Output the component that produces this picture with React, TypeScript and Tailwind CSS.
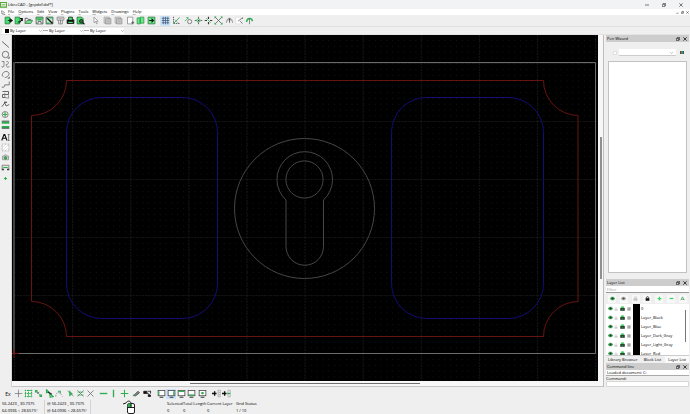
import React from "react";

type Shapes = React.ReactNode;

const G = "#2fae50";
const D = "#3b3b3b";
const L = "#a8a8a8";

function Icon({ children, className = "size-[9px]" }: { children: Shapes; className?: string }) {
  return (
    <svg viewBox="0 0 12 12" className={`${className} block shrink-0`} fill="none" stroke={D} strokeWidth="1" aria-hidden="true">
      {children}
    </svg>
  );
}

interface Tool {
  name: string;
  art: Shapes;
  active?: boolean;
}

const screenArt = (extra: Shapes) => (
  <>
    <rect x="1.5" y="2" width="9" height="7" fill="#fff" />
    <path d="M3.5 11h5" strokeWidth="1.4" />
    {extra}
  </>
);

const gridArt = (color: string) => <path d="M1 3h10M1 6h10M1 9h10M3 1v10M6 1v10M9 1v10" stroke={color} />;

const fileTools: Tool[] = [
  { name: "New", art: <><path d="M1.5 1.5h6v9h-6z" fill="#45e06e" stroke="#1f7a38" /><path d="M5 6h3V3.5L11.5 6 8 8.5V6" fill="#111" stroke="#111" /></> },
  { name: "New from template", art: <><path d="M1.5 1.5h6v9h-6z" fill="#45e06e" stroke="#1f7a38" /><path d="M5 8h3l3-4M8 3.5h3v3" stroke="#111" strokeWidth="1.6" /></> },
  { name: "Open", art: <><path d="M1.5 10V3h3l1 1.5H9V6" stroke={D} /><path d="M1.5 10L4 6h7.5L9 10z" fill="#6de58a" stroke="#3d7a4c" /></> },
  { name: "Save", art: <><path d="M1.5 1.5h9v9h-9z" fill="#dff5e4" /><path d="M1 2.5h10M3 5h6" stroke={G} strokeWidth="2" /><path d="M4 10V7.5h4V10" fill="#fff" /></> },
  { name: "Save as", art: <><path d="M1.5 1.5h9v9h-9z" fill="#c6f1d0" /><path d="M3 3l7 7" stroke="#111" strokeWidth="1.8" /><path d="M2 9.5h4M6 2.5h4" stroke={G} strokeWidth="1.5" /></> },
  { name: "Save all", art: <><path d="M1.5 1.5h9v4h-9zM3.5 5.5v5h5v-5M6 5v5" stroke="#777" /><path d="M3 3.5h6" stroke="#999" /></> },
  { name: "Print", art: <><path d="M1.5 5h9v5h-9z" fill="#111" stroke="#111" /><path d="M3.5 5V1.5h5V5" fill="#45e06e" stroke="#111" /><path d="M3 8.5h6" stroke="#45e06e" strokeWidth="1.6" /></> },
  { name: "Print preview", art: <><path d="M1.5 1.5h6l2 2v7h-8z" fill="#45e06e" stroke="#1d5c2d" /><circle cx="7" cy="7" r="2.4" fill="#2d6e3e" stroke="#111" /><path d="M9 9l2.3 2" stroke="#111" strokeWidth="1.5" /></> },
];

const pointerTools: Tool[] = [
  { name: "Select", art: <path d="M4 1.5v7.5l2-1.7 1.4 3.2 1-.5L7 7h2.5z" fill="#fff" stroke="#777" strokeWidth=".8" /> },
];

const copyArt = (
  <>
    <path d="M1.5 1.5h7v8h-7z" fill="#e2e2e2" stroke="#999" />
    <path d="M3.5 3.5h7v7h-7z" fill="#d0d0d0" stroke="#8b8b8b" />
    <path d="M5 5.5h4M5 8h4" stroke="#999" />
  </>
);

const editTools: Tool[] = [
  { name: "Cut", art: copyArt },
  { name: "Copy", art: copyArt },
];

const blockTools: Tool[] = [
  { name: "Paste", art: <><path d="M2 1.5h7v9H2z" fill="#fff" stroke="#888" /><path d="M7 9h4M9 7v4" stroke="#444" /></> },
  { name: "Blocks", art: <><path d="M1.5 2.5h4v8h-4zM5.5 1.5h5v8h-5z" fill="#69ea88" stroke="#2e9148" /></> },
  { name: "Insert block", art: <><path d="M1.5 1.5h9v9h-9z" fill="#69ea88" stroke="#26713b" /><path d="M3 6h5M6 3.5L8.5 6 6 8.5" stroke="#111" strokeWidth="1.6" /></> },
];

const gridTools: Tool[] = [
  { name: "Grid", art: gridArt("#3f5a78"), active: true },
  { name: "Draft mode", art: <><path d="M2 1v9h9" strokeDasharray="2 1" /><path d="M2 10l8-8" stroke={G} strokeWidth="1.2" /><path d="M4 5l4 4" stroke="#888" /></> },
];

const viewTools: Tool[] = [
  { name: "Redraw", art: <><circle cx="7.5" cy="7.5" r="2.8" stroke="#666" /><path d="M1 7l4-4M3 2h2.5v2.5" stroke={G} /></> },
  { name: "Zoom in", art: <><path d="M6 1v10M1 6h10" stroke={D} strokeDasharray="2.5 1.5" /><path d="M6 3l3 3-3 3-3-3z" stroke={G} strokeWidth="1.2" /></> },
  { name: "Zoom out", art: <><path d="M6 1v3M6 8v3M1 6h3M8 6h3" strokeWidth="1.6" /><path d="M3 3l6 6" stroke={G} /></> },
  { name: "Auto zoom", art: <><path d="M1.5 1.5l9 9M10.5 1.5l-9 9" stroke="#555" /><path d="M1 3V1h2M9 1h2v2M1 9v2h2M9 11h2V9" stroke={G} /></> },
  { name: "Previous view", art: <><path d="M2 9c0-8 8-8 8 0" stroke="#777" /><path d="M6 3v6M4 6l2-2 2 2" /></> },
  { name: "Zoom window", art: <><path d="M1 1.5h7v9H1z" fill="#fff" stroke="#ddd" /><path d="M4 7l5-4M7 7l3 3M10 2v2" stroke="#555" /></> },
  { name: "Pan", art: <><path d="M2 8c1-6 7-6 8-1" stroke={G} strokeWidth="1.8" /><path d="M6 3v8" stroke="#666" /></> },
];

const drawTools: Tool[] = [
  { name: "Line", art: <path d="M1.5 2l9 8" /> },
  { name: "Circle", art: <><circle cx="6" cy="6" r="4.3" stroke="#555" /><path d="M9 11h2V9" /></> },
  { name: "Curve", art: <path d="M1 2h3v4c0 5-3 4-3 2M7 2c5 0 3 4 0 4 0 5 4 4 4 2" stroke="#666" /> },
  { name: "Ellipse", art: <><path d="M3 9C-1 6 5 0 9 2.5S9 10 5 10" stroke="#555" /><path d="M9 11h2V9" /></> },
  { name: "Polyline", art: <path d="M1 9.5c3 1 4-1 4-3h6V2" stroke="#555" /> },
  { name: "Select entities", art: <><path d="M2 2h8v4H2v4h4" /><path d="M5 4v6l5 1V7" stroke="#777" /></> },
  { name: "Dimension", art: <><path d="M1 9l4-5 2 4 4-2" /><path d="M4 3h4" stroke="#444" strokeWidth="1.5" /></> },
  { name: "Modify", art: <><circle cx="5.5" cy="6" r="4" stroke="#666" /><path d="M5.5 3v6M2.500 6h6" stroke={G} strokeWidth="1.6" /></> },
  { name: "Info", art: <><path d="M1 3.500h10M1 9.500h10" stroke={G} strokeWidth="3" /><path d="M1 1.500h10M1 11h10" stroke="#333" /><path d="M2 6h8" stroke="#eee" strokeWidth="1.500" /></> },
];

const insertTools: Tool[] = [
  { name: "Text", art: <><path d="M1 10L4 2h1l3 8M2.5 7h4" stroke="#111" strokeWidth="1.5" /><path d="M9 2h2.5M9 10h2.5M10.2 2v8" stroke="#333" strokeWidth=".8" /></> },
  { name: "Hatch", art: <><rect x="1.5" y="1.5" width="9" height="9" fill="#fff" stroke="#888" strokeDasharray="1 1" /><path d="M2 6l4-4M2 10l8-8M6 10l4-4" stroke="#aaa" strokeDasharray="1 1" /></> },
  { name: "Image", art: <><path d="M2 4h2l1-1.5h2L8 4h2v5H2z" fill="#ddd" stroke="#888" /><circle cx="6" cy="6.500" r="1.800" fill={G} stroke="#378a4c" /></> },
  { name: "Block", art: <><path d="M1.5 8V3h9v5" stroke="#666" /><path d="M1 8.5h3M8 8.5h3" strokeWidth="2" /><path d="M3 6h6" stroke={G} strokeWidth="1.6" /></> },
  { name: "Point", art: <path d="M6 4v4M4 6h4" stroke={G} strokeWidth="1.4" /> },
];

const snapDots = (a: string) => (
  <>
    <path d="M2 2.5l8 7" stroke="#777" />
    <path d={a} stroke={G} strokeWidth="1.5" />
  </>
);

const snapTools: Tool[] = [
  { name: "Free snap", art: <path d="M6 1v10M1 6h10" stroke="#777" /> },
  { name: "Snap on grid", art: <path d="M2 1v10M6 1v10M10 1v10M1 2h10M1 6h10M1 10h10" stroke={G} strokeDasharray="2 1" strokeWidth="1.3" /> },
  { name: "Snap on endpoints", art: <>{snapDots("M2 2h2v2H2zM8 8h2v2H8z")}<path d="M4 6l3-2" stroke="#555" /></> },
  { name: "Snap on entity", art: <>{snapDots("M2 1l3 3-3 1zM6 6l5 4-4 1z")}<path d="M4 4l5 3" stroke="#222" strokeWidth="1.5" /></> },
  { name: "Snap center", art: <><path d="M1 10c0-6 5-8 9 0" stroke="#777" strokeDasharray="2 1.5" /><path d="M4 3h3v3" stroke={G} strokeWidth="1.4" /></> },
  { name: "Snap middle", art: <>{snapDots("M5 3.5l3 3-3 2z")}</> },
  { name: "Snap distance", art: <><path d="M2 2l8 8M10 2l-8 8" strokeDasharray="2 1" /><path d="M2 4h8M2 8h8" stroke={G} /></> },
  { name: "Snap intersection", art: <path d="M2 2l8 8M10 2l-8 8" stroke="#666" /> },
];

const restrictTools: Tool[] = [
  { name: "Restrict horizontal", art: <path d="M1 6h10" stroke={G} strokeWidth="1.8" /> },
  { name: "Restrict vertical", art: <path d="M6 1v10" stroke={G} strokeWidth="1.8" /> },
  { name: "Restrict orthogonal", art: <path d="M6 1v10M1 6h10" stroke={G} strokeWidth="1.4" /> },
];

const zeroTools: Tool[] = [
  { name: "Set relative zero", art: <><path d="M2 9l6-6 2 2-5 4z" fill="#888" /><path d="M1 8h4" stroke={G} /></> },
  { name: "Lock relative zero", art: <><path d="M1 3h4v3H1zM7 8h3v2H7z" fill="#111" stroke="#111" /><path d="M5 5l4 3M6 3h4v3" stroke="#444" strokeWidth="1.5" /></> },
];

const dockTools: Tool[] = [
  { name: "Left dock", art: screenArt(<path d="M2.5 3v5" stroke={G} strokeWidth="1.5" />) },
  { name: "Right dock", art: screenArt(<path d="M9 3v5" stroke={G} strokeWidth="1.5" />), active: true },
  { name: "Top dock", art: screenArt(<path d="M2 3.200h8" stroke={G} strokeWidth="1.5" />) },
  { name: "Bottom dock", art: screenArt(<path d="M2 8h8" stroke={G} strokeWidth="1.6" />) },
  { name: "Floating dock", art: screenArt(<path d="M4 5.500h4M6 4v3" stroke={G} strokeWidth="1.6" />) },
];

const extraTools: Tool[] = [
  { name: "Add toolbar", art: <><path d="M0 6h6M3.5 3v6" stroke="#111" strokeWidth="1.8" /><path d="M8 1.5h3v9H8zM8 4.5h3M8 7.500h3" stroke={L} /></> },
  { name: "Add menu", art: <><path d="M0 6h6M3.5 3v6" stroke="#111" strokeWidth="1.8" /><path d="M8 1.5h3v9H8z" stroke={L} /><path d="M7 6h4" stroke={G} strokeWidth="1.8" /></> },
];

function ToolGroup({ tools, className, vertical = false }: { tools: Tool[]; className: string; vertical?: boolean }) {
  return (
    <div className={`flex shrink-0 justify-between ${vertical ? "flex-col items-center" : "items-center"} ${className}`}>
      {tools.map((t) => (
        <button
          key={t.name}
          type="button"
          aria-label={t.name}
          className={`flex size-[10px] shrink-0 items-center justify-center ${t.active ? "bg-[#cbe3f9]" : ""}`}
        >
          <Icon>{t.art}</Icon>
        </button>
      ))}
    </div>
  );
}

function Chevron() {
  return (
    <svg viewBox="0 0 6 4" className="pointer-events-none -ml-[6px] h-[2px] w-[3px] shrink-0" fill="none" stroke="#777" aria-hidden="true">
      <path d="M.5.5L3 3 5.5.5" />
    </svg>
  );
}

function PenCombo({ label, swatch }: { label: string; swatch?: boolean }) {
  return (
    <label className={`flex h-[6px] w-[40px] items-center bg-white ${swatch ? "pl-[3px]" : ""}`}>
      <span className={swatch ? "size-[4px] shrink-0 bg-black" : "h-px w-[5px] shrink-0 bg-[#aaa]"} />
      <select aria-label={label} className="h-[6px] min-w-0 flex-1 appearance-none bg-transparent pl-[1px] text-[4px] leading-[6px]">
        <option>By Layer</option>
      </select>
      <Chevron />
    </label>
  );
}

function DockTitle({ title }: { title: string }) {
  return (
    <header className="flex h-[7px] items-center bg-[#cdcdcd] pl-[1px] pr-[2px]">
      <h2 className="flex-1 text-[4px] leading-[7px]">{title}</h2>
      <button type="button" aria-label={`Float ${title}`} className="mr-[3px]">
        <Icon className="size-[4px]"><path d="M1 4.500h7V11H1zM4 4V1h7v7H8" stroke="#222" strokeWidth="2" /></Icon>
      </button>
      <button type="button" aria-label={`Close ${title}`}>
        <Icon className="size-[4px]"><path d="M1 1l10 10M11 1L1 11" stroke="#222" strokeWidth="2.5" /></Icon>
      </button>
    </header>
  );
}

const eye = (c: string, pupil: string) => (
  <>
    <path d="M0 6c3-5 9-5 12 0-3 5-9 5-12 0z" fill={c} stroke={c} />
    <circle cx="6" cy="6" r="2" fill={pupil} stroke={pupil} />
  </>
);
const lock = (c: string) => (
  <>
    <path d="M2 5.500h8V11H2z" fill={c} stroke={c} />
    <path d="M3.500 5V3c0-2 5-2 5 0v2" stroke={c} strokeWidth="1.500" />
  </>
);
const printer = (
  <>
    <path d="M1 5h10v6H1z" fill="#1d3524" stroke="#1d3524" />
    <path d="M3.500 5V1.500h5V5M4 8.500h4" fill="#37c95d" stroke="#37c95d" strokeWidth="1.400" />
  </>
);

const layerTools: Tool[] = [
  { name: "Show all layers", art: eye("#3fa35a", "#1c4427") },
  { name: "Hide all layers", art: eye("#a5a5a5", "#555") },
  { name: "Unlock all layers", art: lock("#c4c4c4") },
  { name: "Lock all layers", art: lock("#111") },
  { name: "Add layer", art: <path d="M6 1.500v9M1.500 6h9" stroke="#38d45f" strokeWidth="3" /> },
  { name: "Remove layer", art: <path d="M1.500 6h9" stroke="#38d45f" strokeWidth="3" /> },
  { name: "Edit layer", art: <><path d="M2 10l4-8 4 8" stroke="#2fae4e" strokeWidth="1.800" /><path d="M3 8h7" stroke="#444" /></> },
];

const layers = ["0", "Layer_Black", "Layer_Blue", "Layer_Dark_Gray", "Layer_Light_Gray", "Layer_Red"];
const menus = ["File", "Options", "Edit", "View", "Plugins", "Tools", "Widgets", "Drawings", "Help"];

function Drawing() {
  return (
    <svg viewBox="12 35 586 346" className="block min-h-0 w-full flex-1 bg-black" fill="none" role="img" aria-label="Drawing">
      <defs>
        <pattern id="dots" x="14.500" y="5.200" width="5.810" height="5.800" patternUnits="userSpaceOnUse">
          <rect width="1" height="1" fill="#151515" />
        </pattern>
        <pattern id="major" x="14" y="5" width="58.100" height="58" patternUnits="userSpaceOnUse">
          <path d="M0 .5H58.100M.5 0V58" stroke="#141414" strokeDasharray="2 1" />
        </pattern>
      </defs>
      <path d="M12 35h586v346H12z" fill="url(#dots)" />
      <path d="M12 35h586v346H12z" fill="url(#major)" />
      <path d="M14 62.500H595.500V353.500H14" stroke="#6c6c6c" />
      <path d="M14 62V354" stroke="#3f3f3f" strokeWidth="2" />
      <path
        d="M66.500 80.500H543.500A35 35 0 0 0 578 115.500V301.500A35 35 0 0 0 543.500 336.500H66.500A35 35 0 0 0 31.500 301.500V115.500A35 35 0 0 0 66.500 80.500Z"
        stroke="#671411"
      />
      <rect x="66.500" y="97.500" width="151" height="221" rx="35" stroke="#110e74" />
      <rect x="391.500" y="97.500" width="152" height="221" rx="35" stroke="#110e74" />
      <g stroke="#474747">
        <circle cx="304.500" cy="208.500" r="70" />
        <circle cx="304.500" cy="179.500" r="18.600" />
        <path d="M286 200A27.800 27.800 0 1 1 323.500 200V246.500A18.700 18.700 0 0 1 286 246.500Z" />
      </g>
      <path d="M12 353.500h7M14 349v9" stroke="#7d1512" />
    </svg>
  );
}

function Readout({ lines, className }: { lines: string[]; className: string }) {
  return (
    <div className={`shrink-0 whitespace-nowrap text-[4px] leading-[7px] ${className}`}>
      {lines.map((l) => (
        <p key={l}>{l}</p>
      ))}
    </div>
  );
}

export default function App() {
  return (
    <div className="flex h-screen flex-col overflow-hidden bg-[#efefef] font-['Open_Sans','Noto_Sans',sans-serif] text-[4px] text-black">
      <header className="flex h-[9px] shrink-0 items-center bg-[#f2f3f4] pr-[7px]">
        <Icon className="size-[7px]">
          <path d="M1 2.500h10v8H1z" stroke="#53a832" strokeWidth="1.800" />
          <path d="M3 6.500h6" stroke="#53a832" strokeWidth="1.500" />
        </Icon>
        <h1 className="ml-[1px] flex-1 text-[4px] leading-[9px]">LibreCAD - [gcpdxf.dxf*]</h1>
        <div className="flex items-center gap-[13px]">
          <button type="button" aria-label="Minimize"><Icon className="size-[4px]"><path d="M0 6h12" strokeWidth="2" /></Icon></button>
          <button type="button" aria-label="Restore"><Icon className="size-[4px]"><path d="M1 4h7v7H1zM4 3V1h7v7H9" strokeWidth="2" /></Icon></button>
          <button type="button" aria-label="Close"><Icon className="size-[4px]"><path d="M1 1l10 10M11 1L1 11" strokeWidth="2" /></Icon></button>
        </div>
      </header>

      <nav className="flex h-[6px] shrink-0 items-center bg-white pl-[1px] pr-[1px]">
        <Icon className="size-[5px]"><path d="M2 1v8M2 9l8 2M4 3l5 4" strokeWidth="1.500" /></Icon>
        <div className="ml-[2px] flex flex-1 gap-[4px]">
          {menus.map((m) => (
            <button key={m} type="button" className="leading-[6px]">
              <span className="underline decoration-[#bbb] decoration-1 underline-offset-1">{m[0]}</span>
              {m.slice(1)}
            </button>
          ))}
        </div>
        <div className="flex gap-[2px]">
          <button type="button" aria-label="Minimize drawing"><Icon className="size-[3px]"><path d="M1 9h9" strokeWidth="2" /></Icon></button>
          <button type="button" aria-label="Restore drawing"><Icon className="size-[3px]"><path d="M1 4h7v7H1zM4 2h7v7" strokeWidth="2" /></Icon></button>
          <button type="button" aria-label="Close drawing"><Icon className="size-[3px]"><path d="M1 1l10 10M11 1L1 11" strokeWidth="2" /></Icon></button>
        </div>
      </nav>

      <div className="flex h-[12px] shrink-0 items-center border-b border-[#e0e0e0] pl-[3px]">
        <ToolGroup tools={fileTools} className="w-[83px]" />
        <ToolGroup tools={pointerTools} className="ml-[4px] w-[10px]" />
        <ToolGroup tools={editTools} className="ml-[2px] w-[21px]" />
        <ToolGroup tools={blockTools} className="ml-[2px] w-[31px]" />
        <ToolGroup tools={gridTools} className="ml-[4px] w-[21px]" />
        <ToolGroup tools={viewTools} className="ml-[2px] w-[72px]" />
      </div>

      <div className="flex h-[8px] shrink-0 items-center gap-[1px] border-b border-[#e4e4e4] pl-[2px]">
        <PenCombo label="Pen color" swatch />
        <PenCombo label="Pen width" />
        <PenCombo label="Line type" />
      </div>

      <div className="flex min-h-0 flex-1">
        <aside className="flex w-[12px] shrink-0 flex-col items-center gap-[3px] border-r border-[#d4d4d4] pt-[4px]">
          <ToolGroup tools={drawTools} vertical className="h-[90px]" />
          <ToolGroup tools={insertTools} vertical className="h-[51px]" />
        </aside>

        <main className="flex min-w-0 flex-1 flex-col border-r border-[#bdbdbd]">
          <div className="flex min-h-0 flex-1">
            <div className="flex min-w-0 flex-1 flex-col">
              <Drawing />
            </div>
            <div className="flex w-[5px] shrink-0 flex-col items-center bg-[#f7f7f7] pt-[102px]">
              <div className="h-[142px] w-[2px] bg-[#8f8f8f]" />
            </div>
          </div>
          <div className="h-[6px] shrink-0 border-b border-[#c4c4c4] bg-[#f7f7f7] pl-[178px] pt-[2px]">
            <div className="h-px w-[230px] bg-[#707070]" />
          </div>
        </main>

        <aside className="flex w-[86px] shrink-0 flex-col pl-[2px] pr-[1px]">
          <section className="flex min-h-0 flex-1 flex-col">
            <DockTitle title="Pen Wizard" />
            <div className="flex items-center pb-[5px] pl-[7px] pr-[5px] pt-[7px]">
              <input type="checkbox" aria-label="Filter pens" className="size-[4px] appearance-none border border-[#e0e0e0] bg-white" />
              <select aria-label="Pen favorites" className="ml-[2px] h-[7px] min-w-0 flex-1 appearance-none border-b border-[#ccc] bg-white text-[4px]">
                <option></option>
              </select>
              <Chevron />
              <button type="button" aria-label="Add pen color" className="ml-[7px] flex h-[3px] w-[4px]">
                <span className="h-full flex-1 bg-[#a52d2d]" />
                <span className="h-full flex-1 bg-[#2f9b43]" />
                <span className="h-full flex-1 bg-[#334fb5]" />
              </button>
            </div>
            <div className="mx-[2px] flex-1 border border-[#c2c2c2] bg-white" />
          </section>

          <section className="mt-[6px] shrink-0">
            <DockTitle title="Layer List" />
            <input aria-label="Filter layers" placeholder="Filter" className="block h-[7px] w-full border-b border-[#999] bg-white pl-[1px] text-[4px] leading-[6px] placeholder:text-[#999]" />
            <div className="flex h-[11px] items-center justify-between px-[2px]">
              {layerTools.map((t) => (
                <button key={t.name} type="button" aria-label={t.name} className="flex size-[8px] items-center justify-center bg-[#f8f8f8]">
                  <Icon className="size-[5px]">{t.art}</Icon>
                </button>
              ))}
            </div>
            <div className="flex h-[51px] overflow-hidden bg-white">
              <table className="h-[54px] flex-1 border-collapse self-start">
                <tbody>
                  {layers.map((name) => (
                    <tr key={name} className="h-[9px]">
                      <td className="w-[8px] p-0 pl-[2px]"><Icon className="size-[5px]">{eye("#3fa35a", "#1c4427")}</Icon></td>
                      <td className="w-[6px] p-0"><Icon className="size-[4px]">{lock("#d0d0d0")}</Icon></td>
                      <td className="w-[7px] p-0"><Icon className="size-[5px]">{printer}</Icon></td>
                      <td className="w-[6px] p-0"><Icon className="size-[4px]">{gridArt("#555")}</Icon></td>
                      <td className="w-[7px] bg-black p-0" />
                      <td className="whitespace-nowrap p-0 pl-[1px] leading-[9px]">{name}</td>
                    </tr>
                  ))}
                </tbody>
              </table>
              <div className="w-[4px] shrink-0 pt-[6px]">
                <div className="h-[32px] w-px bg-[#777]" />
              </div>
            </div>
            <div role="tablist" className="flex h-[8px] border-t border-[#ccc]">
              <button type="button" role="tab" aria-selected="false" className="flex-[34] leading-[6px]">Library Browser</button>
              <button type="button" role="tab" aria-selected="false" className="flex-[26] leading-[6px]">Block List</button>
              <button type="button" role="tab" aria-selected="true" className="flex-[24] bg-[#fafafa] leading-[6px]">Layer List</button>
            </div>
          </section>

          <section className="shrink-0">
            <DockTitle title="Command line" />
            <div className="h-[6px] overflow-hidden border-b border-[#aaa] bg-white pl-[1px] leading-[5px]">Loaded document: C:</div>
            <label htmlFor="command" className="block h-[5px] leading-[5px]">Command:</label>
            <input id="command" className="block h-[6px] w-full border border-[#d8d8d8] bg-white text-[4px]" />
          </section>
        </aside>
      </div>

      <div className="flex h-[13px] shrink-0 items-center pl-[3px]">
        <button type="button" className="w-[10px] text-[5px] leading-[10px]">Ex</button>
        <ToolGroup tools={snapTools} className="w-[83px]" />
        <ToolGroup tools={restrictTools} className="ml-[2px] w-[31px]" />
        <ToolGroup tools={zeroTools} className="ml-[2px] w-[21px]" />
        <ToolGroup tools={dockTools} className="ml-[4px] w-[51px]" />
        <ToolGroup tools={extraTools} className="ml-[4px] w-[20px]" />
      </div>

      <footer className="flex h-[14px] shrink-0 items-start pl-[2px]">
        <Readout lines={["56.2423 , 30.7375", "64.0936 < 28.6575°"]} className="w-[43px] border-r border-[#d4d4d4]" />
        <Readout lines={["@  56.2423 , 30.7375", "@  64.0936 < 28.6575°"]} className="w-[46px] border-r border-[#d4d4d4] pl-[2px]" />
        <svg viewBox="0 0 14 14" className="ml-[31px] size-[14px] shrink-0" fill="none" stroke="#222" aria-hidden="true">
          <rect x="5.500" y="3.500" width="7" height="10" rx="1.500" fill="#fff" />
          <path d="M6 4h3v3H6z" fill={G} stroke={G} />
          <path d="M5.500 7.500h7M9 3.500v4M9 3C8 0 5 1 4 3L1 4" />
        </svg>
        <Readout lines={["Selected", "0"]} className="ml-[31px] w-[16px]" />
        <Readout lines={["Total Length", "0"]} className="w-[24px]" />
        <Readout lines={["Current Layer", "0"]} className="w-[29px]" />
        <Readout lines={["Grid Status", "1 / 10"]} className="w-[26px]" />
      </footer>
    </div>
  );
}
